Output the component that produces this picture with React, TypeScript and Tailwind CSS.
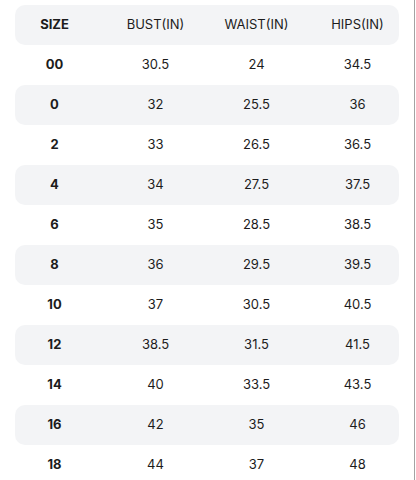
import React from 'react';

interface SizeRow {
  size: string;
  bust: string;
  waist: string;
  hips: string;
}

const rows: SizeRow[] = [
  { size: '00', bust: '30.5', waist: '24', hips: '34.5' },
  { size: '0', bust: '32', waist: '25.5', hips: '36' },
  { size: '2', bust: '33', waist: '26.5', hips: '36.5' },
  { size: '4', bust: '34', waist: '27.5', hips: '37.5' },
  { size: '6', bust: '35', waist: '28.5', hips: '38.5' },
  { size: '8', bust: '36', waist: '29.5', hips: '39.5' },
  { size: '10', bust: '37', waist: '30.5', hips: '40.5' },
  { size: '12', bust: '38.5', waist: '31.5', hips: '41.5' },
  { size: '14', bust: '40', waist: '33.5', hips: '43.5' },
  { size: '16', bust: '42', waist: '35', hips: '46' },
  { size: '18', bust: '44', waist: '37', hips: '48' },
];

const Row: React.FC<{ cells: string[]; shaded: boolean; header?: boolean }> = ({
  cells,
  shaded,
  header,
}) => (
  <div className={`mx-[15px] h-10 rounded-[10px] ${shaded ? 'bg-[#f3f4f6]' : ''}`}>
    <div className="ml-[-11px] mr-[-9px] grid h-full grid-cols-4 items-center text-center">
      {cells.map((cell, i) => (
        <span
          key={i}
          className={i === 0 || (header && i === 0) ? 'font-bold' : 'font-normal'}
        >
          {cell}
        </span>
      ))}
    </div>
  </div>
);

export default function App() {
  return (
    <div
      className="h-[480px] w-[415px] overflow-hidden border-r border-[#a3a3a3] bg-white pt-[5px] text-[13px] text-[#1c1c1c]"
      style={{ fontFamily: 'Inter, "Noto Sans", sans-serif' }}
    >
      <Row cells={['SIZE', 'BUST(IN)', 'WAIST(IN)', 'HIPS(IN)']} shaded header />
      {rows.map((r, idx) => (
        <Row key={r.size} cells={[r.size, r.bust, r.waist, r.hips]} shaded={idx % 2 === 1} />
      ))}
    </div>
  );
}
